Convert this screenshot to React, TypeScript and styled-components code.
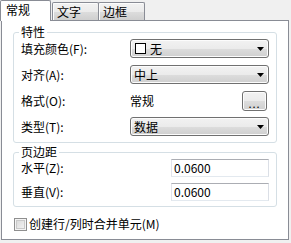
import styled, { createGlobalStyle } from "styled-components";

const GlobalStyle = createGlobalStyle`
  html, body {
    margin: 0;
    padding: 0;
    background: #f0f0f0;
  }
  body {
    font-family: "Noto Sans CJK SC", "Noto Sans", sans-serif;
    font-size: 12px;
    color: #000;
  }
`;

const Window = styled.div`
  width: 291px;
  height: 243px;
  box-sizing: border-box;
  padding: 0 2px 0 1px;
  background: #f0f0f0;
`;

const TabBar = styled.div`
  display: flex;
  align-items: flex-end;
  height: 20px;
  margin-left: -1px;
  position: relative;
  z-index: 1;
`;

const Tab = styled.div<{ $active?: boolean }>`
  box-sizing: border-box;
  display: flex;
  align-items: center;
  width: ${(p) => (p.$active ? "51px" : "47px")};
  height: ${(p) => (p.$active ? "21px" : "18px")};
  margin-bottom: ${(p) => (p.$active ? "-1px" : "0")};
  margin-left: ${(p) => (p.$active ? "0" : "-1px")};
  padding: ${(p) => (p.$active ? "0 0 2px 5px" : "0 0 0 4px")};
  border: 1px solid #898c95;
  border-bottom: none;
  border-radius: 2px 2px 0 0;
  background: ${(p) =>
    p.$active ? "#fff" : "linear-gradient(#f2f2f2, #ebebeb 50%, #dddddd 51%, #cfcfcf)"};
  box-shadow: ${(p) => (p.$active ? "none" : "inset 1px 1px 0 #fcfcfc")};
  line-height: 14px;
  &:nth-child(2) {
    margin-left: 1px;
  }
`;

const Panel = styled.div`
  box-sizing: border-box;
  height: 220px;
  border: 1px solid #898c95;
  background: #fff;
  padding: 5px 11px 0 11px;
`;

const Group = styled.fieldset<{ $top?: number }>`
  margin: ${(p) => p.$top ?? 0}px 0 0 0;
  padding: 0 7px ${(p) => (p.$top ? 5 : 6)}px 7px;
  border: 1px solid #d5dfe5;
  border-radius: 3px;
  min-width: 0;
`;

const Legend = styled.legend`
  padding: 0 2px;
  margin-left: -2px;
  line-height: 12px;
`;

const Rows = styled.div<{ $label: number; $row: number; $gap: number }>`
  display: grid;
  grid-template-columns: ${(p) => p.$label}px 1fr;
  grid-auto-rows: ${(p) => p.$row}px;
  row-gap: ${(p) => p.$gap}px;
  align-items: center;
  margin-top: 1px;
`;

const Label = styled.span`
  line-height: 14px;
  white-space: nowrap;
`;

const Select = styled.div`
  box-sizing: border-box;
  display: flex;
  align-items: center;
  height: 19px;
  padding: 0 4px 0 3px;
  border: 1px solid #707070;
  border-radius: 3px;
  background: linear-gradient(#f2f2f2, #ebebeb 50%, #dddddd 51%, #cfcfcf);
  box-shadow: inset 0 0 0 1px #fcfcfc;
  line-height: 14px;
`;

const SelectText = styled.span`
  flex: 1;
  display: flex;
  align-items: center;
`;

const Swatch = styled.span`
  box-sizing: border-box;
  width: 11px;
  height: 11px;
  border: 1px solid #000;
  background: #fff;
  margin: 0 4px 0 1px;
`;

const Arrow = styled.svg`
  width: 7px;
  height: 4px;
`;

const ValueCell = styled.div`
  display: flex;
  align-items: center;
  justify-content: space-between;
  padding-right: 2px;
  line-height: 14px;
`;

const DotsButton = styled.button`
  box-sizing: border-box;
  width: 25px;
  height: 20px;
  padding: 4px 0 0 0;
  border: 1px solid #707070;
  border-radius: 3px;
  background: linear-gradient(#f2f2f2, #ebebeb 50%, #dddddd 51%, #cfcfcf);
  box-shadow: inset 0 0 0 1px #fcfcfc;
  font: inherit;
  font-size: 11px;
  line-height: 12px;
  letter-spacing: 1px;
  color: #000;
`;

const Input = styled.div`
  box-sizing: border-box;
  display: flex;
  align-items: center;
  width: 98px;
  height: 18px;
  padding-left: 2px;
  border: 1px solid;
  border-color: #abadb3 #dbdfe6 #e3e9ef #e2e3ea;
  background: #fff;
  line-height: 14px;
`;

const CheckRow = styled.label`
  display: flex;
  align-items: center;
  gap: 2px;
  margin: 10px 0 0 1px;
  line-height: 14px;
`;

const CheckBox = styled.span`
  box-sizing: border-box;
  width: 13px;
  height: 13px;
  border: 1px solid #8f8f8f;
  background: linear-gradient(135deg, #d6d6d6, #f7f7f7);
  box-shadow: inset 0 0 0 1px #f4f4f4, inset 0 0 0 2px #c9c9c9;
`;

const DropArrow = () => (
  <Arrow viewBox="0 0 7 4">
    <path d="M0 0h7L3.5 4z" fill="#000" />
  </Arrow>
);

const App = () => {
  return (
    <Window>
      <GlobalStyle />
      <TabBar>
        <Tab $active>常规</Tab>
        <Tab>文字</Tab>
        <Tab>边框</Tab>
      </TabBar>
      <Panel>
        <Group>
          <Legend>特性</Legend>
          <Rows $label={109} $row={19} $gap={7}>
            <Label>填充颜色(F):</Label>
            <Select>
              <SelectText>
                <Swatch />无
              </SelectText>
              <DropArrow />
            </Select>
            <Label>对齐(A):</Label>
            <Select>
              <SelectText>中上</SelectText>
              <DropArrow />
            </Select>
            <Label>格式(O):</Label>
            <ValueCell>
              <span>常规</span>
              <DotsButton>...</DotsButton>
            </ValueCell>
            <Label>类型(T):</Label>
            <Select>
              <SelectText>数据</SelectText>
              <DropArrow />
            </Select>
          </Rows>
        </Group>
        <Group $top={3}>
          <Legend>页边距</Legend>
          <Rows $label={150} $row={18} $gap={6}>
            <Label>水平(Z):</Label>
            <Input>0.0600</Input>
            <Label>垂直(V):</Label>
            <Input>0.0600</Input>
          </Rows>
        </Group>
        <CheckRow>
          <CheckBox />
          创建行/列时合并单元(M)
        </CheckRow>
      </Panel>
    </Window>
  );
};

export default App;
